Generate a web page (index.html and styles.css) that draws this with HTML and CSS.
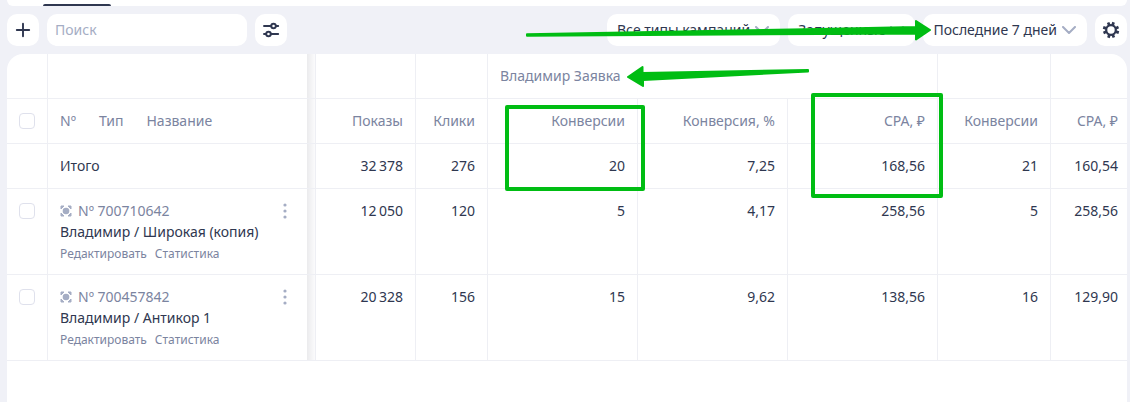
FILE: index.html
```html
<!DOCTYPE html>
<html lang="ru">
<head>
<meta charset="utf-8">
<title>Кампании</title>
<link rel="stylesheet" href="styles.css">
</head>
<body>
<div class="page">
  <div class="tabs"><div class="tab-active"></div></div>

  <div class="toolbar">
    <button class="icon-btn" type="button" aria-label="Добавить">
      <svg width="16" height="16" viewBox="0 0 16 16"><path d="M8 1.8v12.4M1.8 8h12.4" stroke="#2f3750" stroke-width="1.9" stroke-linecap="round"/></svg>
    </button>
    <input class="search" type="text" placeholder="Поиск" aria-label="Поиск">
    <button class="icon-btn" type="button" aria-label="Фильтры">
      <svg width="18" height="18" viewBox="0 0 18 18" fill="none" stroke="#2f3750" stroke-width="1.9" stroke-linecap="round"><path d="M2 5h7.4M14 5h2.2M2 13h2.2M8.7 13h7.5"/><circle cx="11.5" cy="5" r="2.3"/><circle cx="6.5" cy="13" r="2.3"/></svg>
    </button>
    <div class="filters">
      <button class="pill" type="button"><span>Все типы кампаний</span><svg width="14" height="8" viewBox="0 0 14 8"><path d="M1 1l6 6 6-6"/></svg></button>
      <button class="pill" type="button"><span>Запущенные</span><svg width="14" height="8" viewBox="0 0 14 8"><path d="M1 1l6 6 6-6"/></svg></button>
      <button class="pill" type="button"><span>Последние 7 дней</span><svg width="14" height="8" viewBox="0 0 14 8"><path d="M1 1l6 6 6-6"/></svg></button>
      <button class="icon-btn" type="button" aria-label="Настройки">
        <svg width="18" height="18" viewBox="0 0 18 18" fill="none" stroke="#2f3750"><circle cx="9" cy="9" r="4.8" stroke-width="2.2"/><path d="M10.6 4.2l1-3M13.5 7.4l3-1.3M13.8 10.6l3 1M10.6 13.5l1.3 3M7.4 13.8l-1 3M4.5 10.6l-3 1.3M4.2 7.4l-3-1M7.4 4.5L6.1 1.5" stroke-width="2.7"/></svg>
      </button>
    </div>
  </div>

  <main class="panel">
    <table class="grid">
      <colgroup><col class="c-check"><col><col class="c-views"><col class="c-clicks"><col class="c-wide"><col class="c-wide"><col class="c-wide"><col class="c-conv"><col class="c-cpa"></colgroup>
      <thead>
        <tr><th></th><th class="name"></th><th></th><th></th><th class="goal" colspan="3">Владимир Заявка</th><th></th><th></th></tr>
        <tr>
          <th class="check"><input type="checkbox" aria-label="Выбрать все"></th>
          <th class="name"><div class="heads"><span>Nº</span><span>Тип</span><span>Название</span></div></th>
          <th>Показы</th><th>Клики</th><th>Конверсии</th><th>Конверсия, %</th><th>CPA, ₽</th><th>Конверсии</th><th>CPA, ₽</th>
        </tr>
      </thead>
      <tbody>
        <tr><td></td><td class="name">Итого</td><td>32&thinsp;378</td><td>276</td><td>20</td><td>7,25</td><td>168,56</td><td>21</td><td>160,54</td></tr>
        <tr>
          <td class="check"><input type="checkbox" aria-label="Выбрать кампанию 700710642"></td>
          <td class="name">
            <div class="number"><svg width="12" height="12" viewBox="0 0 12 12"><circle cx="6" cy="6" r="3.3"/><path d="M1 1h3L1 4zM11 1v3L8 1zM11 11H8l3-3zM1 11V8l3 3z"/></svg><span>Nº 700710642</span>
              <button class="more" type="button" aria-label="Ещё"><svg width="4" height="16" viewBox="0 0 4 16"><circle cx="2" cy="2" r="1.6"/><circle cx="2" cy="8" r="1.6"/><circle cx="2" cy="14" r="1.6"/></svg></button></div>
            <div class="title">Владимир / Широкая (копия)</div>
            <div class="links"><a href="#">Редактировать</a><a href="#">Статистика</a></div>
          </td>
          <td>12&thinsp;050</td><td>120</td><td>5</td><td>4,17</td><td>258,56</td><td>5</td><td>258,56</td>
        </tr>
        <tr>
          <td class="check"><input type="checkbox" aria-label="Выбрать кампанию 700457842"></td>
          <td class="name">
            <div class="number"><svg width="12" height="12" viewBox="0 0 12 12"><circle cx="6" cy="6" r="3.3"/><path d="M1 1h3L1 4zM11 1v3L8 1zM11 11H8l3-3zM1 11V8l3 3z"/></svg><span>Nº 700457842</span>
              <button class="more" type="button" aria-label="Ещё"><svg width="4" height="16" viewBox="0 0 4 16"><circle cx="2" cy="2" r="1.6"/><circle cx="2" cy="8" r="1.6"/><circle cx="2" cy="14" r="1.6"/></svg></button></div>
            <div class="title">Владимир / Антикор 1</div>
            <div class="links"><a href="#">Редактировать</a><a href="#">Статистика</a></div>
          </td>
          <td>20&thinsp;328</td><td>156</td><td>15</td><td>9,62</td><td>138,56</td><td>16</td><td>129,90</td>
        </tr>
      </tbody>
    </table>
  </main>

  <svg class="marks" width="1130" height="402" viewBox="0 0 1130 402" aria-hidden="true">
    <g fill="none" stroke="#00bd13" stroke-width="4" stroke-linejoin="round"><rect x="507" y="107" width="136" height="82"/><rect x="813" y="95" width="128" height="101"/></g>
    <g fill="#00bd13" stroke="#00bd13" stroke-width="2" stroke-linejoin="round"><path d="M527 34.300L820 29L916 27V21L930 30L916 39.500V33.500L820 34L527 35.700Z"/><path d="M808 70L642.500 73V67L628 77L643 86V80L808 71.500Z"/></g>
  </svg>
</div>
</body>
</html>
```
FILE: styles.css
```css
* { box-sizing: border-box; }
body {
  margin: 0;
  background: #f0f1f7;
  color: #2f3750;
  font: 14px/20px "Noto Sans", sans-serif;
}
button, input { font: inherit; color: inherit; margin: 0; }
button { border: 0; padding: 0; background: none; }
.page {
  position: relative;
  display: flex;
  flex-direction: column;
  min-height: 100vh;
  padding: 0 3px 0 7px;
  overflow: hidden;
}
.tabs {
  display: flex;
  align-items: flex-end;
  height: 6px;
  padding-left: 36px;
  background: #fff;
  border-radius: 0 0 12px 12px;
}
.tab-active { width: 68px; height: 2px; background: #2f3750; border-radius: 2px 2px 0 0; }
.toolbar { display: flex; gap: 8px; padding: 8px 0; }
.icon-btn {
  display: flex;
  align-items: center;
  justify-content: center;
  flex: none;
  width: 32px;
  height: 32px;
  background: #fff;
  border-radius: 10px;
}
.search {
  width: 200px;
  height: 32px;
  padding: 0 8px 2px;
  border: 0;
  border-radius: 10px;
  background: #fff;
}
.search::placeholder { color: #a5adc4; opacity: 1; }
.filters { display: flex; gap: 8px; margin-left: auto; }
.pill {
  display: flex;
  align-items: center;
  gap: 5px;
  height: 32px;
  padding: 0 11px 0 10px;
  background: #fff;
  border-radius: 10px;
  white-space: nowrap;
}
.pill path { fill: none; stroke: #a5adc4; stroke-width: 2; stroke-linecap: round; stroke-linejoin: round; }
.panel { flex: 1; background: #fff; border-radius: 16px 16px 0 0; overflow: hidden; }
.grid { width: 100%; table-layout: fixed; border-collapse: separate; border-spacing: 0; }
.c-check { width: 41px; }
.c-views { width: 100px; }
.c-clicks { width: 72px; }
.c-wide { width: 150px; }
.c-conv { width: 113px; }
.c-cpa { width: 76px; }
th, td {
  height: 45px;
  padding: 12px;
  border: 0 solid #eeeff4;
  border-width: 0 1px 1px 0;
  text-align: right;
  vertical-align: top;
  font-weight: 400;
  white-space: nowrap;
}
th { color: #7b84a0; }
th:last-child, td:last-child { border-right: 0; padding-right: 9px; }
.name, .goal { text-align: left; }
.name { background: linear-gradient(90deg, #ebebed, #fbfbfc) right top / 8px 100% no-repeat; }
.check { padding: 14px 12px 0; }
.check input {
  appearance: none;
  display: block;
  width: 16px;
  height: 16px;
  margin: 0;
  border: 1px solid #dfe1ec;
  border-radius: 4px;
  background: #fff;
}
.heads { display: flex; gap: 23px; }
.number { display: flex; align-items: center; gap: 6px; color: #7b84a0; }
.number > svg { fill: #a5adc4; }
.number path { stroke: #a5adc4; stroke-width: 1; stroke-linejoin: round; }
.more { display: flex; margin-left: auto; margin-right: 8px; padding: 0 8px; }
.more svg { fill: #a5adc4; }
.title { padding-top: 1px; }
.links { display: flex; gap: 8px; padding-top: 4px; font-size: 12px; line-height: 16px; }
.links a { color: #7b84a0; text-decoration: none; }
.marks { position: absolute; left: 0; top: 0; pointer-events: none; }
```
